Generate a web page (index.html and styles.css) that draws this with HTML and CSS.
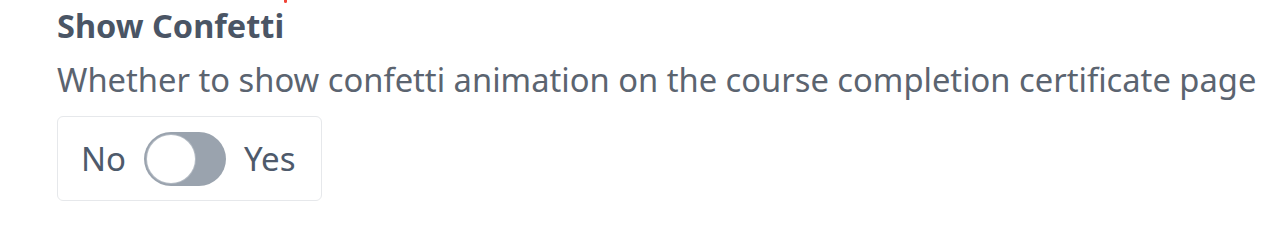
FILE: index.html
```html
<!DOCTYPE html>
<html lang="en">
<head>
<meta charset="utf-8">
<link rel="stylesheet" href="styles.css">
</head>
<body>
<div class="field">
  <span class="req-mark"></span>
  <div class="label">Show Confetti</div>
  <div class="desc">Whether to show confetti animation on the course completion certificate page</div>
  <div class="toggle-box">
    <span class="opt">No</span>
    <span class="switch"><span class="knob"></span></span>
    <span class="opt">Yes</span>
  </div>
</div>
</body>
</html>
```
FILE: styles.css
```css
html, body {
  margin: 0;
  padding: 0;
  background: #ffffff;
}
body {
  font-family: "Noto Sans", "Open Sans", sans-serif;
  color: #4a5563;
}
.field {
  position: relative;
  padding: 6px 0 0 57px;
}
.req-mark {
  position: absolute;
  left: 284px;
  top: 0;
  width: 3px;
  height: 3px;
  background: #f04438;
  border-radius: 0 0 2px 2px;
}
.label {
  font-size: 32.5px;
  font-weight: 700;
  line-height: 40px;
  color: #4a5565;
}
.desc {
  font-size: 32.7px;
  line-height: 44px;
  margin-top: 12px;
  color: #5b6470;
}
.toggle-box {
  display: inline-flex;
  align-items: center;
  gap: 18px;
  margin-top: 14px;
  height: 85px;
  padding: 0 25px 0 23px;
  border: 1px solid #e6e8eb;
  border-radius: 6px;
  box-sizing: border-box;
}
.opt {
  font-size: 33px;
  color: #4e5a6b;
}
.switch {
  display: flex;
  align-items: center;
  width: 82px;
  height: 54px;
  border-radius: 27px;
  background: #9aa3ae;
  padding: 3px;
  box-sizing: border-box;
}
.knob {
  width: 48px;
  height: 48px;
  border-radius: 50%;
  background: #ffffff;
  box-shadow: 0 0 0 1px #b3bac3;
}
```
